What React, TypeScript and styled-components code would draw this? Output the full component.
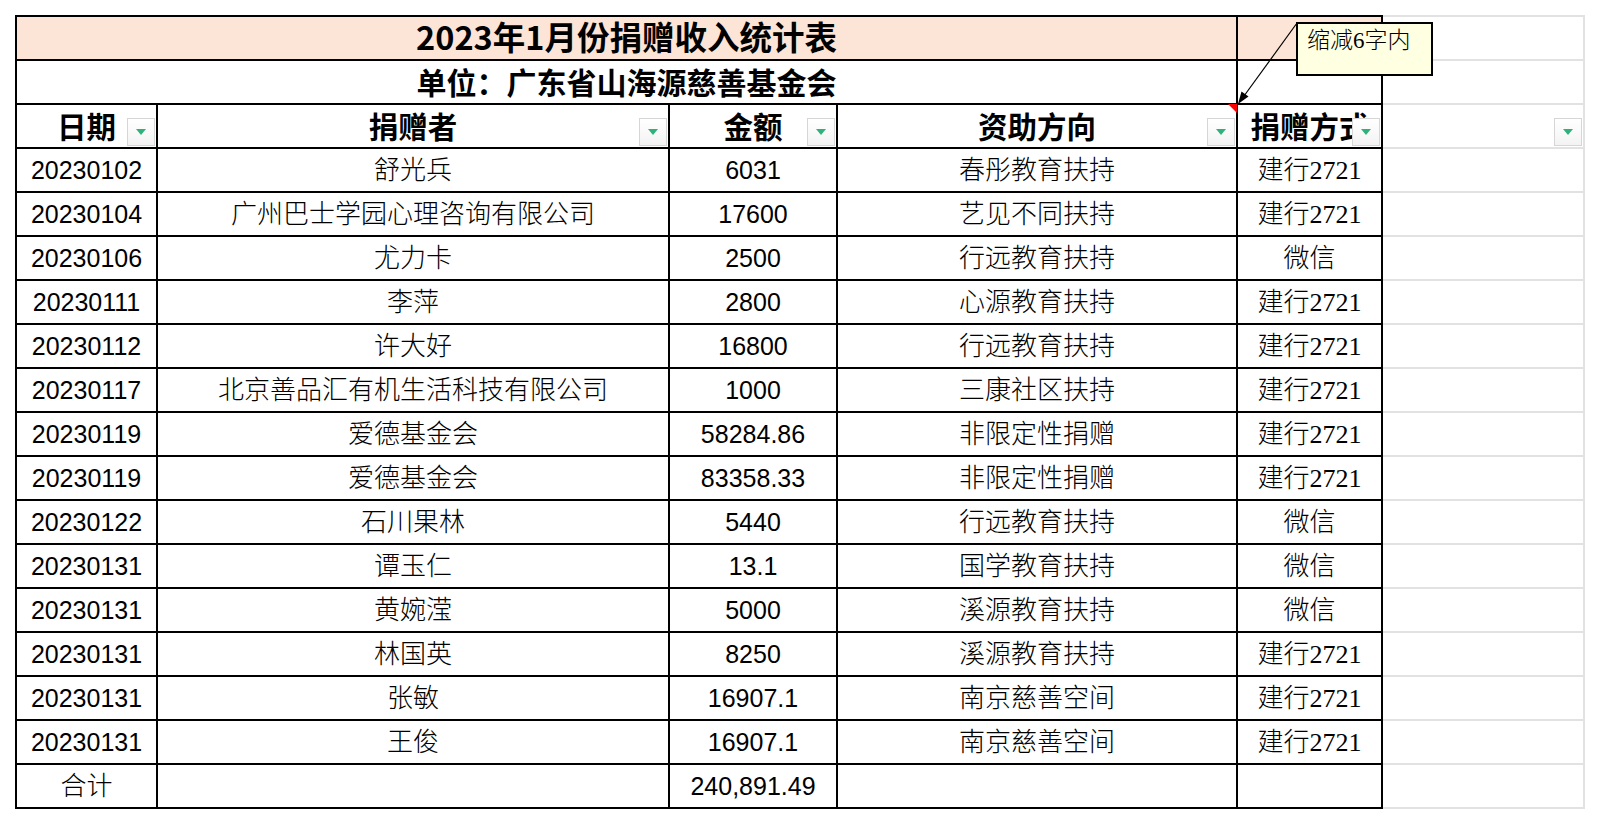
import React from "react";
import styled, { createGlobalStyle, css } from "styled-components";

const GlobalStyle = createGlobalStyle`
  html, body {
    margin: 0;
    padding: 0;
    background: #ffffff;
  }
  body {
    font-family: "Noto Sans CJK SC", "Liberation Sans", sans-serif;
    color: #000;
  }
`;

const Page = styled.div`
  position: relative;
  width: 1600px;
  height: 824px;
  padding: 15px 0 0 15px;
  box-sizing: border-box;
  overflow: hidden;
`;

const Sheet = styled.table`
  border-collapse: collapse;
  table-layout: fixed;
  width: 1568px;
`;

const SheetRow = styled.tr`
  height: 44px;
`;

type CellKind = "title" | "subtitle" | "head" | "date" | "text" | "amount" | "method" | "empty" | "blank";

const Cell = styled.td<{ $kind: CellKind; $pink?: boolean }>`
  position: relative;
  border: 2px solid #000;
  padding: 0;
  text-align: center;
  vertical-align: middle;
  white-space: nowrap;
  overflow: visible;
  line-height: 1;
  background: ${(p) => (p.$pink ? "#fce4d6" : "#fff")};
  ${(p) => {
    switch (p.$kind) {
      case "title":
        return css`
          font-family: "Noto Sans CJK SC", sans-serif;
          font-weight: 700;
          font-size: 32.5px;
          padding-bottom: 3px;
        `;
      case "subtitle":
        return css`
          font-family: "Noto Sans CJK SC", sans-serif;
          font-weight: 700;
          font-size: 30px;
          padding-bottom: 2px;
        `;
      case "head":
        return css`
          font-family: "Noto Sans CJK SC", sans-serif;
          font-weight: 700;
          font-size: 29.5px;
        `;
      case "date":
      case "amount":
        return css`
          font-family: "Liberation Sans", Arial, sans-serif;
          font-size: 25px;
        `;
      case "text":
      case "method":
        return css`
          font-family: "Liberation Serif", "Noto Sans CJK SC", serif;
          font-weight: 300;
          font-size: 26px;
          padding-top: 2px;
        `;
      default:
        return css``;
    }
  }}
`;

const GhostCell = styled.td`
  position: relative;
  border: 2px solid #e2e2e2;
  padding: 0;
  background: #fff;
`;

const FilterButton = styled.span`
  position: absolute;
  right: 1px;
  bottom: 1px;
  width: 28px;
  height: 28px;
  box-sizing: border-box;
  border: 1px solid #d6d6d6;
  background: linear-gradient(#ffffff, #f3f3f3);
  display: flex;
  align-items: center;
  justify-content: center;
  &::after {
    content: "";
    width: 0;
    height: 0;
    border-top: 6px solid #2fb27a;
    border-left: 5px solid transparent;
    border-right: 5px solid transparent;
  }
`;

const CommentMark = styled.span`
  position: absolute;
  top: -1px;
  right: -1px;
  width: 0;
  height: 0;
  border-top: 9px solid #ff0000;
  border-left: 9px solid transparent;
`;

const CommentBox = styled.div`
  position: absolute;
  left: 1296px;
  top: 22px;
  width: 137px;
  height: 54px;
  box-sizing: border-box;
  border: 2px solid #000;
  background: #ffffe1;
  padding: 4px 0 0 9px;
  font-family: "Liberation Serif", "Noto Sans CJK SC", serif;
  font-weight: 300;
  font-size: 23px;
  line-height: 1.1;
  color: #000;
  z-index: 2;
`;

const Leader = styled.svg`
  position: absolute;
  left: 0;
  top: 0;
  width: 1600px;
  height: 824px;
  pointer-events: none;
  z-index: 3;
`;

type Row = { date: string; donor: string; amount: string; purpose: string; method: string };

const rows: Row[] = [
  { date: "20230102", donor: "舒光兵", amount: "6031", purpose: "春彤教育扶持", method: "建行2721" },
  { date: "20230104", donor: "广州巴士学园心理咨询有限公司", amount: "17600", purpose: "艺见不同扶持", method: "建行2721" },
  { date: "20230106", donor: "尤力卡", amount: "2500", purpose: "行远教育扶持", method: "微信" },
  { date: "20230111", donor: "李萍", amount: "2800", purpose: "心源教育扶持", method: "建行2721" },
  { date: "20230112", donor: "许大好", amount: "16800", purpose: "行远教育扶持", method: "建行2721" },
  { date: "20230117", donor: "北京善品汇有机生活科技有限公司", amount: "1000", purpose: "三康社区扶持", method: "建行2721" },
  { date: "20230119", donor: "爱德基金会", amount: "58284.86", purpose: "非限定性捐赠", method: "建行2721" },
  { date: "20230119", donor: "爱德基金会", amount: "83358.33", purpose: "非限定性捐赠", method: "建行2721" },
  { date: "20230122", donor: "石川果林", amount: "5440", purpose: "行远教育扶持", method: "微信" },
  { date: "20230131", donor: "谭玉仁", amount: "13.1", purpose: "国学教育扶持", method: "微信" },
  { date: "20230131", donor: "黄婉滢", amount: "5000", purpose: "溪源教育扶持", method: "微信" },
  { date: "20230131", donor: "林国英", amount: "8250", purpose: "溪源教育扶持", method: "建行2721" },
  { date: "20230131", donor: "张敏", amount: "16907.1", purpose: "南京慈善空间", method: "建行2721" },
  { date: "20230131", donor: "王俊", amount: "16907.1", purpose: "南京慈善空间", method: "建行2721" },
];

const widths = [141, 512, 168, 400, 145, 202];

export default function App() {
  return (
    <>
      <GlobalStyle />
      <Page>
        <Sheet>
          <colgroup>
            {widths.map((w, i) => (
              <col key={i} style={{ width: w }} />
            ))}
          </colgroup>
          <tbody>
            <SheetRow>
              <Cell $kind="title" $pink colSpan={4}>
                2023年1月份捐赠收入统计表
              </Cell>
              <Cell $kind="blank" $pink />
              <GhostCell />
            </SheetRow>
            <SheetRow>
              <Cell $kind="subtitle" colSpan={4}>
                单位：广东省山海源慈善基金会
              </Cell>
              <Cell $kind="blank" />
              <GhostCell />
            </SheetRow>
            <SheetRow>
              <Cell $kind="head">
                日期
                <FilterButton />
              </Cell>
              <Cell $kind="head">
                捐赠者
                <FilterButton />
              </Cell>
              <Cell $kind="head">
                金额
                <FilterButton />
              </Cell>
              <Cell $kind="head">
                资助方向
                <FilterButton />
                <CommentMark />
              </Cell>
              <Cell $kind="head">
                捐赠方式
                <FilterButton />
              </Cell>
              <GhostCell>
                <FilterButton />
              </GhostCell>
            </SheetRow>
            {rows.map((r, i) => (
              <SheetRow key={i}>
                <Cell $kind="date">{r.date}</Cell>
                <Cell $kind="text">{r.donor}</Cell>
                <Cell $kind="amount">{r.amount}</Cell>
                <Cell $kind="text">{r.purpose}</Cell>
                <Cell $kind="method">{r.method}</Cell>
                <GhostCell />
              </SheetRow>
            ))}
            <SheetRow>
              <Cell $kind="text">合计</Cell>
              <Cell $kind="empty" />
              <Cell $kind="amount">240,891.49</Cell>
              <Cell $kind="empty" />
              <Cell $kind="empty" />
              <GhostCell />
            </SheetRow>
          </tbody>
        </Sheet>
        <CommentBox>缩减6字内</CommentBox>
        <Leader viewBox="0 0 1600 824">
          <line x1="1297" y1="23" x2="1244" y2="96" stroke="#000" strokeWidth="1.2" />
          <polygon points="1238,104 1248.5,96.5 1241.5,91.5" fill="#000" />
        </Leader>
      </Page>
    </>
  );
}
